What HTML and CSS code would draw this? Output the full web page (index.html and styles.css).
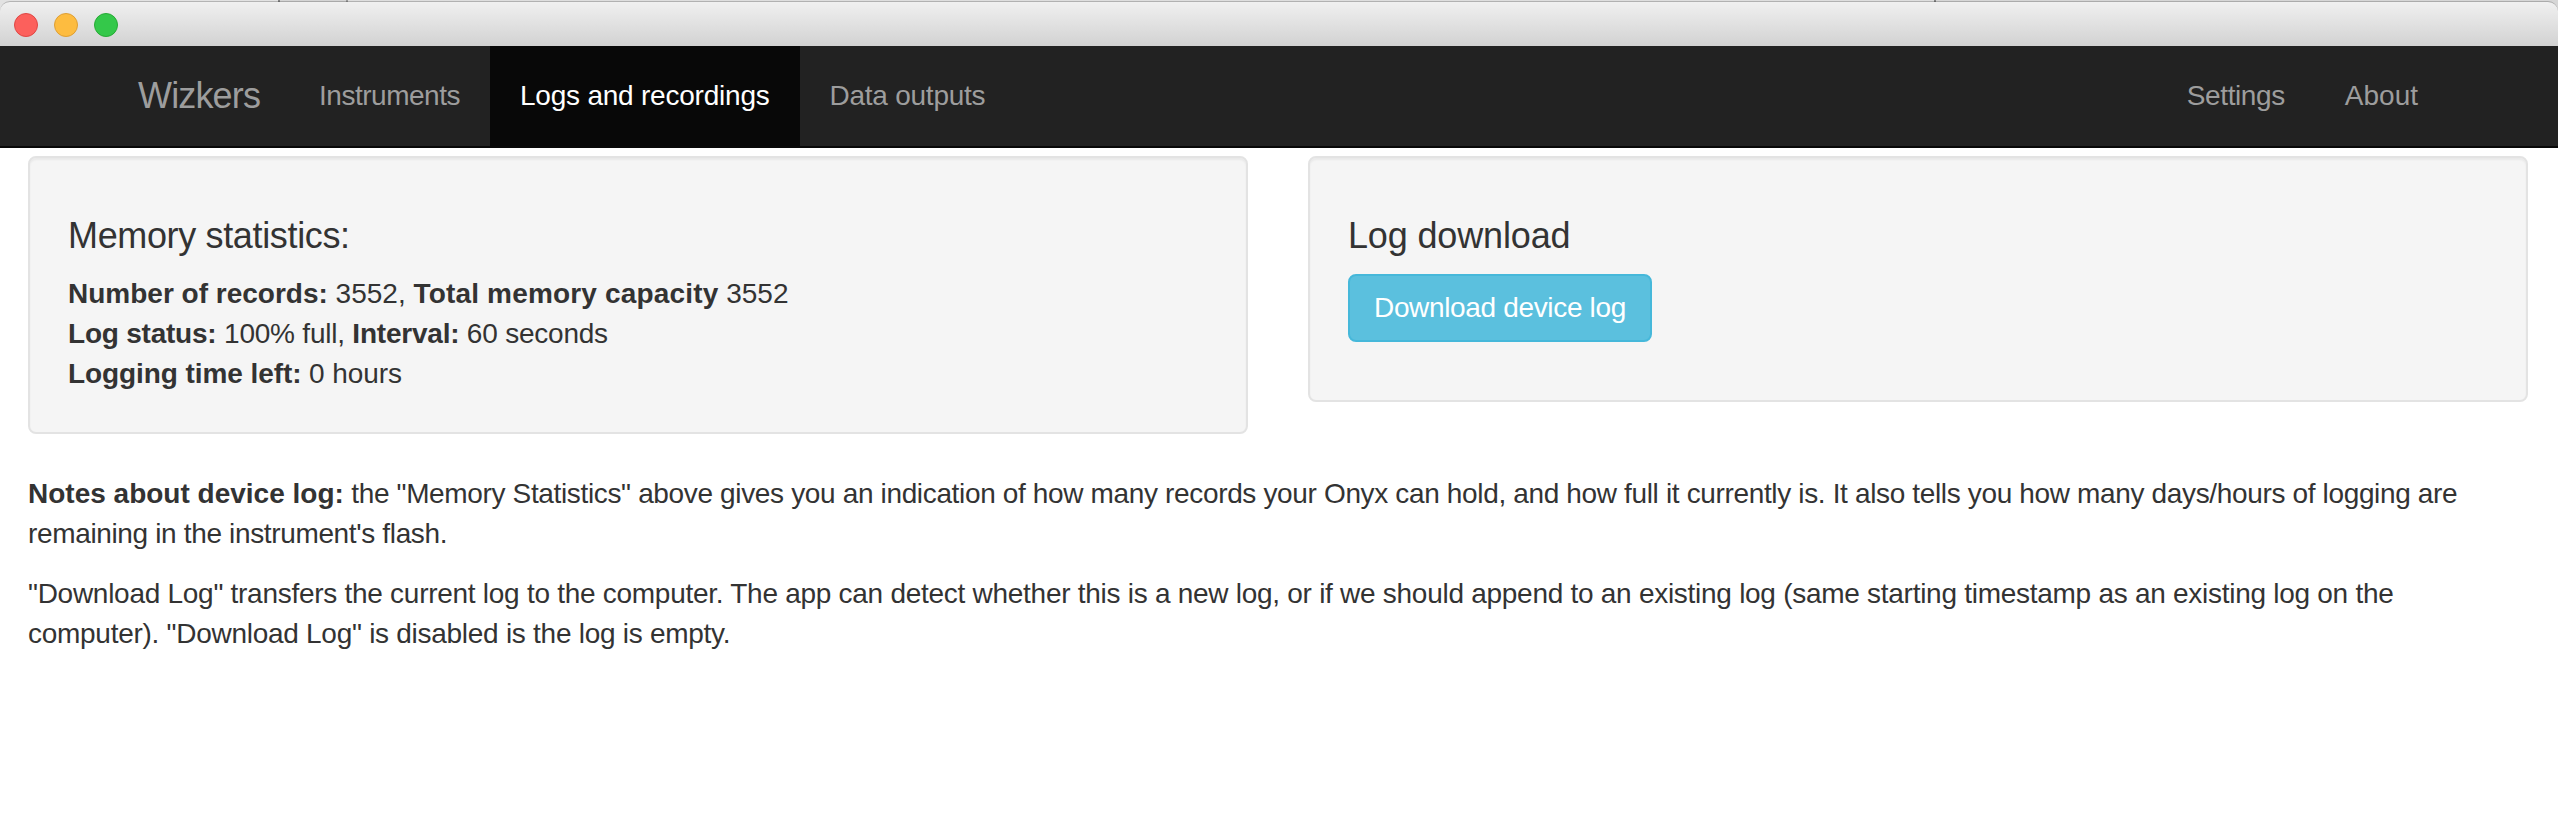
FILE: index.html
```html
<!DOCTYPE html>
<html lang="en">
<head>
<meta charset="utf-8">
<title>Wizkers</title>
<link rel="stylesheet" href="styles.css">
</head>
<body>
<header class="titlebar">
  <div class="titlebar-inner">
    <span class="light light-close"></span>
    <span class="light light-min"></span>
    <span class="light light-max"></span>
  </div>
</header>
<nav class="navbar">
  <a class="brand">Wizkers</a>
  <a class="nav-item instruments">Instruments</a>
  <a class="nav-item active">Logs and recordings</a>
  <a class="nav-item outputs">Data outputs</a>
  <a class="nav-item settings">Settings</a>
  <a class="nav-item about">About</a>
</nav>
<main class="content">
  <div class="cards">
    <section class="well">
      <h4 class="stats-title">Memory statistics:</h4>
      <p><b>Number of records:</b> 3552, <b class="capacity">Total memory capacity</b> 3552</p>
      <p class="tight"><b>Log status:</b> 100% full, <b>Interval:</b> 60 seconds</p>
      <p class="time-left"><b>Logging time left:</b> 0 hours</p>
    </section>
    <section class="well">
      <h4>Log download</h4>
      <button class="btn">Download device log</button>
    </section>
  </div>
  <div class="notes">
    <p class="about-log"><b>Notes about device log:</b> the "Memory Statistics" above gives you an indication of how many records your Onyx can hold, and how full it currently is. It also tells you how many days/hours of logging are remaining in the instrument's flash.</p>
    <p class="about-download">"Download Log" transfers the current log to the computer. The app can detect whether this is a new log, or if we should append to an existing log (same starting timestamp as an existing log on the computer). "Download Log" is disabled is the log is empty.</p>
  </div>
</main>
</body>
</html>
```
FILE: styles.css
```css
* { box-sizing: border-box; }
body {
  margin: 0;
  background: #fff;
  color: #333;
  font: 28px/40px "Liberation Sans", Arial, sans-serif;
}
.titlebar {
  height: 46px;
  padding-top: 1px;
  background: linear-gradient(90deg, #e2e2e2 278px, #858585 278px 280px, #d4d4d4 280px 346px, #999 346px 348px, #dedede 348px 1934px, #858585 1934px 1936px, #d6d6d6 1936px);
}
.titlebar-inner {
  display: flex;
  align-items: center;
  gap: 16px;
  height: 45px;
  padding: 1px 14px 0;
  border-top: 1px solid rgba(0, 0, 0, .2);
  border-radius: 10px 10px 0 0;
  background: linear-gradient(#f0f0f0, #d2d2d2) padding-box;
}
.light { width: 24px; height: 24px; border: 1px solid; border-radius: 50%; }
.light-close { background: #fc605c; border-color: #df4744; }
.light-min { background: #fdbc40; border-color: #de9f34; }
.light-max { background: #34c84a; border-color: #27aa35; }
.navbar {
  display: flex;
  height: 102px;
  padding: 0 110px 0 108px;
  border-bottom: 2px solid #080808;
  background: #222;
  color: #9d9d9d;
}
.brand { width: 181px; padding: 30px 0 0 30px; font-size: 36px; letter-spacing: -.85px; }
.nav-item { padding: 30px 30px 0; white-space: nowrap; }
.instruments { letter-spacing: -.48px; }
.active { background: #080808; color: #fff; letter-spacing: -.22px; }
.outputs { letter-spacing: -.25px; }
.settings { margin-left: auto; letter-spacing: -.4px; }
.content { padding: 8px 30px 0 28px; }
.cards { display: grid; grid-template-columns: 1fr 1fr; gap: 60px; align-items: start; }
.well {
  padding: 38px;
  border: 2px solid #e3e3e3;
  border-radius: 8px;
  background: #f5f5f5;
  box-shadow: inset 0 2px 2px rgba(0, 0, 0, .05);
}
.well h4 {
  margin: 20px 0 18px;
  font-size: 36px;
  font-weight: 400;
  line-height: 40px;
  letter-spacing: -.15px;
}
.well .stats-title { letter-spacing: -.35px; }
.well p { margin: 0; }
.capacity { letter-spacing: .17px; }
.tight { letter-spacing: -.22px; }
.time-left { letter-spacing: -.08px; }
.btn {
  display: block;
  height: 68px;
  margin-bottom: 20px;
  padding: 0 24px;
  border: 2px solid #46b8da;
  border-radius: 8px;
  background: #5bc0de;
  color: #fff;
  font: inherit;
  letter-spacing: -.34px;
}
.notes { padding-top: 40px; }
.notes p { margin: 0 0 20px; }
.notes b { letter-spacing: 0; }
.about-log { letter-spacing: -.35px; }
.about-download { letter-spacing: -.275px; }
```
